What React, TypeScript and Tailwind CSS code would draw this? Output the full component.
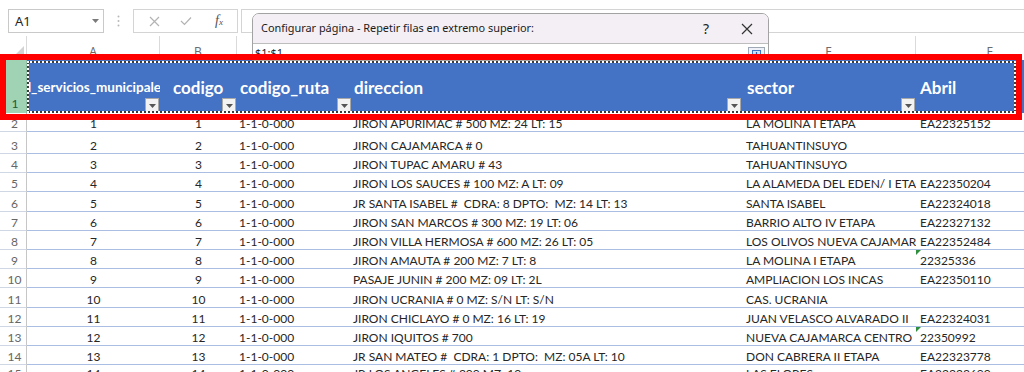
import React from 'react';

type Row = {
  n: number;
  a: string;
  b: string;
  c: string;
  d: string;
  e: string;
  f: string;
  h: string;
  tri?: boolean;
};

const rows: Row[] = [
  { n: 2, a: '1', b: '1', c: '1-1-0-000', d: 'JIRON APURIMAC # 500 MZ: 24 LT: 15', e: 'LA MOLINA I ETAPA', f: 'EA22325152', h: 'h-[19px]' },
  { n: 3, a: '2', b: '2', c: '1-1-0-000', d: 'JIRON CAJAMARCA # 0', e: 'TAHUANTINSUYO', f: '', h: 'h-[22px]' },
  { n: 4, a: '3', b: '3', c: '1-1-0-000', d: 'JIRON TUPAC AMARU # 43', e: 'TAHUANTINSUYO', f: '', h: 'h-[19.2px]' },
  { n: 5, a: '4', b: '4', c: '1-1-0-000', d: 'JIRON LOS SAUCES # 100 MZ: A LT: 09', e: 'LA ALAMEDA DEL EDEN/ I ETAPA', f: 'EA22350204', h: 'h-[19.2px]' },
  { n: 6, a: '5', b: '5', c: '1-1-0-000', d: 'JR SANTA ISABEL #  CDRA: 8 DPTO:  MZ: 14 LT: 13', e: 'SANTA ISABEL', f: 'EA22324018', h: 'h-[19.2px]' },
  { n: 7, a: '6', b: '6', c: '1-1-0-000', d: 'JIRON SAN MARCOS # 300 MZ: 19 LT: 06', e: 'BARRIO ALTO IV ETAPA', f: 'EA22327132', h: 'h-[19.2px]' },
  { n: 8, a: '7', b: '7', c: '1-1-0-000', d: 'JIRON VILLA HERMOSA # 600 MZ: 26 LT: 05', e: 'LOS OLIVOS NUEVA CAJAMARCA', f: 'EA22352484', h: 'h-[19.2px]' },
  { n: 9, a: '8', b: '8', c: '1-1-0-000', d: 'JIRON AMAUTA # 200 MZ: 7 LT: 8', e: 'LA MOLINA I ETAPA', f: '22325336', h: 'h-[19.2px]', tri: true },
  { n: 10, a: '9', b: '9', c: '1-1-0-000', d: 'PASAJE JUNIN # 200 MZ: 09 LT: 2L', e: 'AMPLIACION LOS INCAS', f: 'EA22350110', h: 'h-[19.2px]' },
  { n: 11, a: '10', b: '10', c: '1-1-0-000', d: 'JIRON UCRANIA # 0 MZ: S/N LT: S/N', e: 'CAS. UCRANIA', f: '', h: 'h-[19.2px]' },
  { n: 12, a: '11', b: '11', c: '1-1-0-000', d: 'JIRON CHICLAYO # 0 MZ: 16 LT: 19', e: 'JUAN VELASCO ALVARADO II', f: 'EA22324031', h: 'h-[19.2px]' },
  { n: 13, a: '12', b: '12', c: '1-1-0-000', d: 'JIRON IQUITOS # 700', e: 'NUEVA CAJAMARCA CENTRO', f: '22350992', h: 'h-[19.2px]', tri: true },
  { n: 14, a: '13', b: '13', c: '1-1-0-000', d: 'JR SAN MATEO #  CDRA: 1 DPTO:  MZ: 05A LT: 10', e: 'DON CABRERA II ETAPA', f: 'EA22323778', h: 'h-[19.2px]' },
  { n: 15, a: '14', b: '14', c: '1-1-0-000', d: 'JR LOS ANGELES # 300 MZ: 10', e: 'LAS FLORES', f: 'EA22323690', h: 'h-[16.5px]' },
];

function FilterBtn() {
  return (
    <div className="absolute right-[1px] bottom-[1px] w-[14px] h-[14px] bg-[#f2f2f2] border border-[#a8a8a8] flex items-end justify-center pb-[3px]">
      <svg width="7" height="4" viewBox="0 0 7 4">
        <path d="M0 0 L7 0 L3.5 4 Z" fill="#555" />
      </svg>
    </div>
  );
}

const cellBase = 'shrink-0 flex items-end pb-[1px] overflow-hidden whitespace-pre border-b border-[#aabde2] leading-none';

export default function App() {
  return (
    <div className="relative w-[1024px] h-[372px] overflow-hidden bg-white [font-family:Lato,sans-serif] text-[#262626]">
      {/* formula bar */}
      <div className="h-[36px] flex items-start pt-[9px] pl-[8px] [font-family:'Noto_Sans',sans-serif]">
        <div className="w-[96px] h-[24px] border border-[#c9c9c9] flex items-center justify-between pl-[6px] pr-[4px]">
          <span className="text-[13px] text-[#262626] leading-none">A1</span>
          <svg width="7" height="4" viewBox="0 0 7 4">
            <path d="M0 0 L7 0 L3.5 4 Z" fill="#7a7a7a" />
          </svg>
        </div>
        <div className="w-[29px] h-[24px] flex items-center justify-center">
          <svg width="3" height="12" viewBox="0 0 3 12">
            <circle cx="1.5" cy="1.5" r="1" fill="#b8b8b8" />
            <circle cx="1.5" cy="6" r="1" fill="#b8b8b8" />
            <circle cx="1.5" cy="10.5" r="1" fill="#b8b8b8" />
          </svg>
        </div>
        <div className="w-[105px] h-[24px] border border-[#d4d4d4] flex items-center">
          <div className="w-[36px] flex justify-center pl-[4px]">
            <svg width="11" height="11" viewBox="0 0 11 11">
              <path d="M1 1 L10 10 M10 1 L1 10" stroke="#b3b3b3" strokeWidth="1.2" />
            </svg>
          </div>
          <div className="w-[32px] flex justify-center">
            <svg width="12" height="10" viewBox="0 0 12 10">
              <path d="M1 5 L4.5 8.5 L11 1.5" stroke="#b3b3b3" strokeWidth="1.2" fill="none" />
            </svg>
          </div>
          <div className="w-[34px] flex justify-center">
            <span className="[font-family:'Liberation_Serif',serif] italic text-[14px] text-[#555] leading-none">
              f<span className="text-[9px]">x</span>
            </span>
          </div>
        </div>
        <div className="ml-[3px] flex-1 h-[24px] border-y border-l border-[#d4d4d4]" />
      </div>

      {/* column letters */}
      <div className="flex h-[24px] text-[12px] text-[#6b6b6b] leading-none [font-family:'Noto_Sans',sans-serif]">
        <div className="w-[27px] shrink-0 border-r border-[#dadada] flex items-end justify-end pr-[2px] pb-[4px]">
          <svg width="10" height="10" viewBox="0 0 10 10">
            <path d="M10 0 L10 10 L0 10 Z" fill="#d3d3d3" />
          </svg>
        </div>
        <div className="w-[133px] shrink-0 border-r border-[#dadada] flex items-end justify-center pb-[2px]">A</div>
        <div className="w-[77px] shrink-0 border-r border-[#dadada] flex items-end justify-center pb-[2px]">B</div>
        <div className="w-[115px] shrink-0 border-r border-[#dadada] flex items-end justify-center pb-[2px]">C</div>
        <div className="w-[390px] shrink-0 border-r border-[#dadada] flex items-end justify-center pb-[2px]">D</div>
        <div className="w-[174px] shrink-0 border-r border-[#dadada] flex items-end justify-center pb-[2px]">E</div>
        <div className="w-[148px] shrink-0 border-r border-[#dadada] flex items-end justify-center pb-[2px]">F</div>
      </div>

      {/* header row 1 */}
      <div className="flex h-[53px]">
        <div className="w-[27px] shrink-0 bg-[#9fd3b3] border-r border-[#8cbf9f] flex items-end justify-center pl-[4px] pb-[3px] text-[12px] text-[#1f5a36] leading-none">1</div>
        <div className="flex flex-1 bg-[#4472c4] text-white font-bold leading-none">
          <div className="relative w-[133px] shrink-0 flex items-end justify-center pb-[19px] overflow-hidden whitespace-nowrap text-[13.5px]">
            <span>id_servicios_municipales</span>
            <FilterBtn />
          </div>
          <div className="relative w-[77px] shrink-0 flex items-end pl-[13px] pb-[17px] overflow-hidden whitespace-nowrap text-[17px]">
            codigo
            <FilterBtn />
          </div>
          <div className="relative w-[115px] shrink-0 flex items-end pl-[3px] pb-[17px] overflow-hidden whitespace-nowrap text-[17px]">
            codigo_ruta
            <FilterBtn />
          </div>
          <div className="relative w-[390px] shrink-0 flex items-end pl-[2px] pb-[17px] overflow-hidden whitespace-nowrap text-[17px]">
            direccion
            <FilterBtn />
          </div>
          <div className="relative w-[174px] shrink-0 flex items-end pl-[5px] pb-[17px] overflow-hidden whitespace-nowrap text-[17px]">
            sector
            <FilterBtn />
          </div>
          <div className="relative w-[148px] shrink-0 flex items-end pl-[4px] pb-[17px] overflow-hidden whitespace-nowrap text-[17px]">
            Abril
            <FilterBtn />
          </div>
        </div>
      </div>

      {/* data rows */}
      {rows.map((r) => (
        <div key={r.n} className={`flex ${r.h} text-[12px]`}>
          <div className="w-[27px] shrink-0 flex items-end justify-center pl-[3px] pb-[1px] border-b border-r border-b-[#cfd6e4] border-r-[#c6c6c6] text-[12px] text-[#666] leading-none">
            {r.n}
          </div>
          <div className={`w-[133px] justify-center ${cellBase}`}>{r.a}</div>
          <div className={`w-[77px] justify-center ${cellBase}`}>{r.b}</div>
          <div className={`w-[115px] pl-[2px] ${cellBase}`}>{r.c}</div>
          <div className={`w-[390px] pl-[1px] ${cellBase}`}>{r.d}</div>
          <div className={`w-[174px] pl-[4px] ${cellBase}`}>{r.e}</div>
          <div className={`relative w-[148px] pl-[4px] ${cellBase}`}>
            {r.tri && (
              <div className="absolute left-0 top-0 w-0 h-0 border-t-[5px] border-t-[#2f8f3f] border-r-[5px] border-r-transparent" />
            )}
            {r.f}
          </div>
        </div>
      ))}

      {/* dialog */}
      <div className="absolute left-[252px] top-[13px] w-[517px] h-[48px] bg-white border border-[#a3a3a3] rounded-t-[7px] overflow-hidden [font-family:'Noto_Sans',sans-serif]">
        <div className="h-[30px] bg-[#f4eff5] border-b border-[#bdbdbd] flex items-center pl-[8px] pr-[10px]">
          <span className="text-[10.9px] text-[#1b1b1b] leading-none">
            Configurar página - Repetir filas en extremo superior:
          </span>
          <span className="ml-auto mr-[32px] text-[14px] text-[#222] leading-none">?</span>
          <svg width="12" height="12" viewBox="0 0 12 12" className="mr-[5px]">
            <path d="M1 1 L11 11 M11 1 L1 11" stroke="#333" strokeWidth="1.2" />
          </svg>
        </div>
        <div className="flex items-start pt-[3px] pl-[2px] pr-[3px]">
          <span className="text-[11px] text-[#222] leading-none">$1:$1</span>
          <div className="ml-auto w-[17px] h-[14px] border border-[#9fa8b5] bg-[#eef2f8] flex items-center justify-center">
            <svg width="9" height="9" viewBox="0 0 9 9">
              <rect x="0.5" y="0.5" width="8" height="8" fill="#cfe0f5" stroke="#3d73c4" />
              <path d="M4.5 2 L4.5 6 M2.5 4.5 L4.5 6.5 L6.5 4.5" stroke="#2d5fb0" strokeWidth="1.2" fill="none" />
            </svg>
          </div>
        </div>
      </div>

      {/* marching ants */}
      <div className="absolute left-[27px] top-[61px] w-[989px] h-[52px] border-2 border-[#3b3b3b]">
        <div className="absolute -inset-[2px] border-2 border-dotted border-white" />
      </div>

      {/* red highlight */}
      <div className="absolute left-0 top-[54px] w-[1022px] h-[66px] border-[6px] border-[#ff0000]" />
    </div>
  );
}
